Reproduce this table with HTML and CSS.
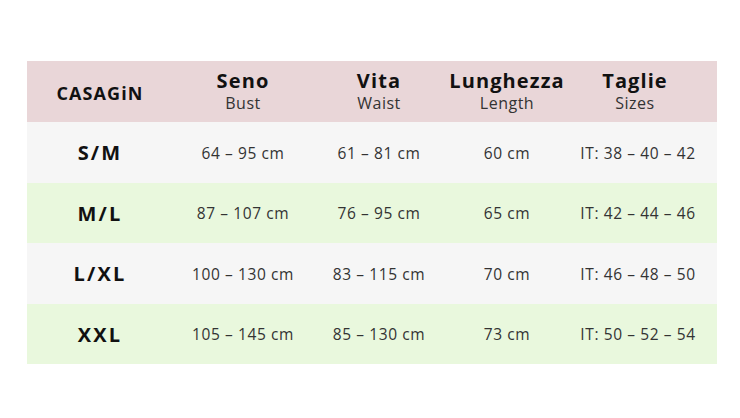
FILE: index.html
```html
<!DOCTYPE html>
<html lang="it">
<head>
<meta charset="utf-8">
<title>Tabella taglie</title>
<link rel="stylesheet" href="styles.css">
</head>
<body>
<main class="page">
  <table class="sizes">
    <colgroup>
      <col class="c1"><col class="c2"><col class="c3"><col class="c4"><col class="c5">
    </colgroup>
    <thead>
      <tr class="head">
        <th class="brand">CASAGiN</th>
        <th><span class="it">Seno</span><span class="en">Bust</span></th>
        <th><span class="it">Vita</span><span class="en">Waist</span></th>
        <th><span class="it">Lunghezza</span><span class="en">Length</span></th>
        <th class="last"><span class="it">Taglie</span><span class="en">Sizes</span></th>
      </tr>
    </thead>
    <tbody>
      <tr class="grey">
        <td class="size">S/M</td><td>64 – 95 cm</td><td>61 – 81 cm</td><td>60 cm</td><td class="last">IT: 38 – 40 – 42</td>
      </tr>
      <tr class="green">
        <td class="size">M/L</td><td>87 – 107 cm</td><td>76 – 95 cm</td><td>65 cm</td><td class="last">IT: 42 – 44 – 46</td>
      </tr>
      <tr class="grey">
        <td class="size">L/XL</td><td>100 – 130 cm</td><td>83 – 115 cm</td><td>70 cm</td><td class="last">IT: 46 – 48 – 50</td>
      </tr>
      <tr class="green">
        <td class="size">XXL</td><td>105 – 145 cm</td><td>85 – 130 cm</td><td>73 cm</td><td class="last">IT: 50 – 52 – 54</td>
      </tr>
    </tbody>
  </table>
</main>
</body>
</html>
```

FILE: styles.css
```css
html, body {
  margin: 0;
  padding: 0;
  background: #ffffff;
}
body {
  font-family: "Open Sans", "Noto Sans", "Liberation Sans", sans-serif;
  color: #222;
}
.page {
  padding: 61px 23px 0 27px;
}
.sizes {
  width: 690px;
  border-collapse: collapse;
  table-layout: fixed;
}
.c1 { width: 146px; }
.c2 { width: 140px; }
.c3 { width: 132px; }
.c4 { width: 124px; }
.c5 { width: 148px; }

.head { background: #e9d6d8; height: 61px; }
.grey { background: #f6f6f6; height: 61px; }
.green { background: #e9f8dd; height: 60px; }

th, td {
  padding: 0;
  text-align: center;
  vertical-align: middle;
  white-space: nowrap;
}
th {
  font-weight: 700;
  color: #111;
}
.brand {
  font-size: 18px;
  letter-spacing: 1.1px;
  padding-top: 2px;
}
.it {
  display: block;
  font-size: 20px;
  line-height: 24px;
  letter-spacing: 1.1px;
}
.en {
  display: block;
  font-size: 16px;
  font-weight: 400;
  line-height: 21px;
  letter-spacing: 0.5px;
  color: #333;
}
td {
  font-size: 15.5px;
  color: #333;
  letter-spacing: 0.6px;
}
td.size {
  font-size: 20px;
  font-weight: 700;
  color: #111;
  letter-spacing: 2.2px;
}
.last {
  padding-right: 10px;
}
th.last {
  padding-right: 16px;
}
```
